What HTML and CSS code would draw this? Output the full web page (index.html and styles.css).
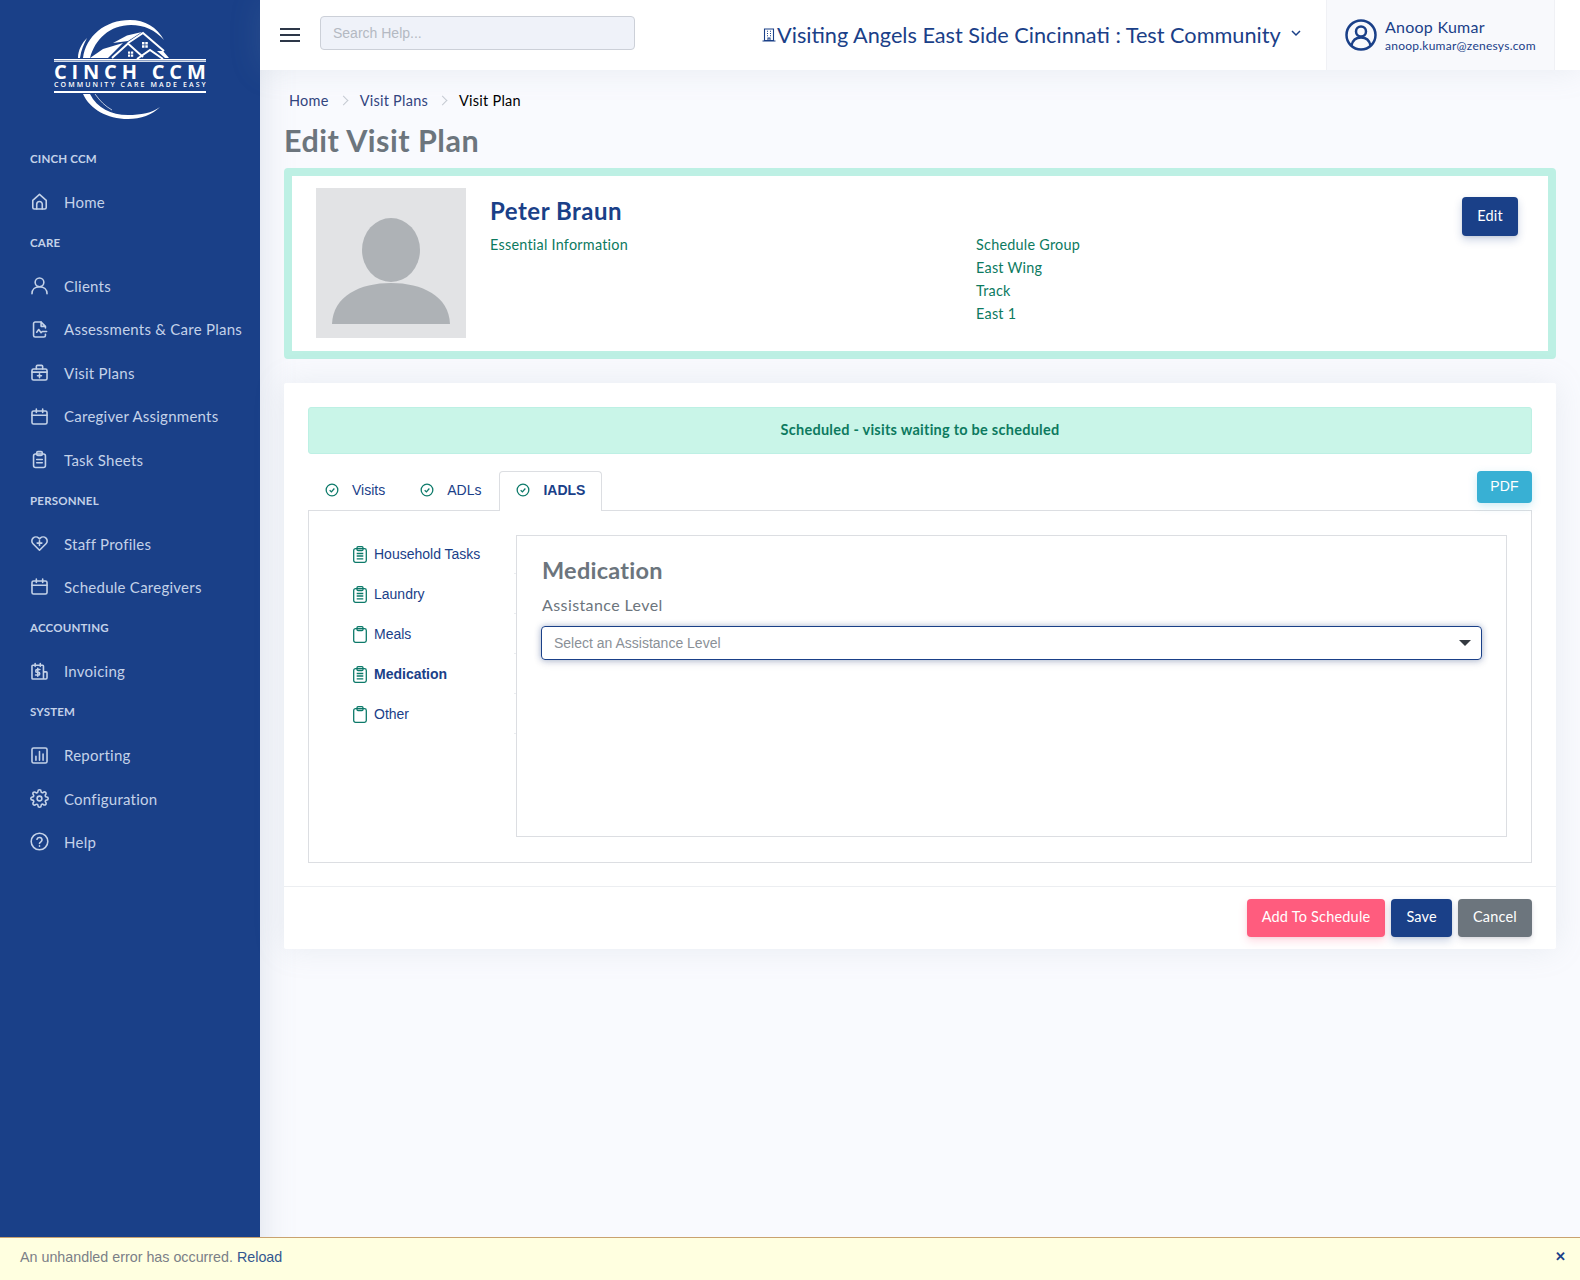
FILE: index.html
```html
<!DOCTYPE html>
<html lang="en">
<head>
  <meta charset="UTF-8">
  <title>Edit Visit Plan</title>
  <link rel="stylesheet" href="styles.css">
</head>
<body>

  <svg class="sprite" width="0" height="0">
    <defs>
      <symbol id="i-home" viewBox="0 0 24 24"><path d="M3.500 10.500 12 3l8.500 7.500v9a2 2 0 0 1-2 2h-13a2 2 0 0 1-2-2z"/><path d="M8.500 21.500v-6a3.500 3.500 0 0 1 7 0v6"/></symbol>
      <symbol id="i-user" viewBox="0 0 24 24"><circle cx="12" cy="8" r="5.500"/><path d="M2.500 22.500c0-5.500 4-9 9.500-9s9.500 3.500 9.500 9"/></symbol>
      <symbol id="i-file" viewBox="0 0 24 24"><path d="M14 2.500H6.500a2 2 0 0 0-2 2v15a2 2 0 0 0 2 2h11a2 2 0 0 0 2-2v-1.500"/><path d="M14 2.500 19.500 8v2M14 2.500V8h5.500"/><path d="M8.500 15.500l2.500-3.500 3 4 1.500-1.500H21"/></symbol>
      <symbol id="i-case" viewBox="0 0 24 24"><rect x="2.500" y="7.500" width="19" height="14" rx="2"/><path d="M8 7.500V4.500a1.500 1.500 0 0 1 1.500-1.500h5A1.500 1.500 0 0 1 16 4.500v3M2.500 11.500h19M12 13.500v5M9.500 16h5"/></symbol>
      <symbol id="i-cal" viewBox="0 0 24 24"><rect x="2.500" y="5" width="19" height="16.500" rx="2"/><path d="M2.500 10.500h19M8 2.500v4.500M16 2.500v4.500"/></symbol>
      <symbol id="i-clip" viewBox="0 0 24 24"><rect x="4.500" y="5" width="15" height="17" rx="2.500"/><rect x="8.500" y="2" width="7" height="5" rx="1.500"/><path d="M8.500 12h7M8.500 16h7"/></symbol>
      <symbol id="i-sheet" viewBox="0 0 14 17"><rect x="0.700" y="2.700" width="12.600" height="13.600" rx="1.800"/><rect x="4" y="0.700" width="6" height="3.800" rx="1"/><path d="M3.700 7.500h6.600M3.700 10h6.600M3.700 12.800h6.600"/></symbol>
      <symbol id="i-sheet-plain" viewBox="0 0 14 17"><rect x="0.700" y="2.700" width="12.600" height="13.600" rx="1.800"/><rect x="4" y="0.700" width="6" height="3.800" rx="1"/></symbol>
      <symbol id="i-heart" viewBox="0 0 24 24"><path d="M12 20.500 3.800 12.300a5 5 0 0 1 0-7.100 5.200 5.200 0 0 1 7.300 0l.9.900.9-.9a5.200 5.200 0 0 1 7.300 0 5 5 0 0 1 0 7.100z"/><path d="M12 8.500v6M9 11.500h6"/></symbol>
      <symbol id="i-bill" viewBox="0 0 24 24"><path d="M17 20.500V5a1 1 0 0 0-1-1H3.500a1 1 0 0 0-1 1v15.500a1 1 0 0 0 1 1H20a1.500 1.500 0 0 0 1.500-1.500v-6.500a1 1 0 0 0-1-1H17"/><path d="M6.500 2v3.500M13 2v3.500M12.500 9.500H9a1.700 1.700 0 0 0 0 3.500h1.500a1.700 1.700 0 0 1 0 3.500H7M9.800 8v10"/></symbol>
      <symbol id="i-bars" viewBox="0 0 24 24"><rect x="2.500" y="2.500" width="19" height="19" rx="2"/><path d="M7.500 18v-5M12 18V7M16.500 18v-8"/></symbol>
      <symbol id="i-gear" viewBox="0 0 24 24"><circle cx="12" cy="12" r="3"/><path d="M19.400 15a1.650 1.650 0 0 0 .33 1.820l.06.06a2 2 0 0 1 0 2.830 2 2 0 0 1-2.830 0l-.06-.06a1.650 1.650 0 0 0-1.820-.33 1.650 1.650 0 0 0-1 1.510V21a2 2 0 0 1-2 2 2 2 0 0 1-2-2v-.09A1.650 1.650 0 0 0 9 19.400a1.650 1.650 0 0 0-1.820.33l-.06.06a2 2 0 0 1-2.830 0 2 2 0 0 1 0-2.830l.06-.06a1.650 1.650 0 0 0 .33-1.820 1.650 1.650 0 0 0-1.510-1H3a2 2 0 0 1-2-2 2 2 0 0 1 2-2h.09A1.650 1.650 0 0 0 4.600 9a1.650 1.650 0 0 0-.33-1.820l-.06-.06a2 2 0 0 1 0-2.830 2 2 0 0 1 2.830 0l.06.06a1.650 1.650 0 0 0 1.820.33H9a1.650 1.650 0 0 0 1-1.510V3a2 2 0 0 1 2-2 2 2 0 0 1 2 2v.09a1.650 1.650 0 0 0 1 1.510 1.650 1.650 0 0 0 1.820-.33l.06-.06a2 2 0 0 1 2.830 0 2 2 0 0 1 0 2.830l-.06.06a1.650 1.650 0 0 0-.33 1.820V9a1.650 1.650 0 0 0 1.510 1H21a2 2 0 0 1 2 2 2 2 0 0 1-2 2h-.09a1.650 1.650 0 0 0-1.510 1z"/></symbol>
      <symbol id="i-help" viewBox="0 0 24 24"><circle cx="12" cy="12" r="10.500"/><path d="M8.800 9.200a3.300 3.300 0 0 1 6.400 1c0 2.200-3.200 2.700-3.200 4.300M12 17.500v.5"/></symbol>
      <symbol id="i-check" viewBox="0 0 24 24"><circle cx="12" cy="12" r="10"/><path d="M8 12.500l3 2.800 5-5.800"/></symbol>
    </defs>
  </svg>

  <div class="layout">
    <aside class="sidebar">
      <div class="logo">
        <svg width="260" height="138" viewBox="0 0 260 138">
          <path class="logo-fill" d="M83 58C86 36 105 20 130 20c15 0 27 7 34 20-9-10-20-15-33-15-21 0-36 14-41 33z"/>
          <path class="logo-fill" d="M78 58c0-8 4-15 9-20-3 6-6 12-7 20z"/>
          <path class="logo-fill" d="M83 94h7c7 14 21 21 38 21 13 0 24-2 32-8-8 8-19 12-32 12-21 0-38-10-45-25z"/>
          <path class="logo-thin" d="M95 94c5 7 10 12 17 16"/>
          <path class="logo-fill" d="M90 58 103 49 123 43 112 54 108 58z"/>
          <path class="logo-fill" d="M113 43 127 35.500 142 32 128 41z"/>
          <path class="logo-line" d="M112 58 128 43.500 143 57"/>
          <path class="logo-line" d="M128 43 143 33 164 51"/>
          <path class="logo-line" d="M137 59 150 50 163 59"/>
          <path class="logo-fill" d="M157 51H163L169 58H165z"/>
          <path class="logo-fill" d="M128 51.500h2.200v2.200H128zM131 51.500h2.200v2.200H131zM128 54.500h2.200v2.200H128zM131 54.500h2.200v2.200H131zM142 42h2.500v2.500H142zM145.300 42h2.500v2.500h-2.500zM142 45.300h2.500v2.500H142zM145.300 45.300h2.500v2.500h-2.500z"/>
          <rect class="logo-fill" x="54" y="59" width="152" height="1.500"/>
          <rect class="logo-fill" x="54" y="61" width="152" height="0.800"/>
          <rect class="logo-fill" x="54" y="91" width="152" height="2"/>
          <text class="logo-name" x="54" y="78.500" textLength="152" lengthAdjust="spacing">CINCH CCM</text>
          <text class="logo-tag" x="54" y="87" textLength="152" lengthAdjust="spacing">COMMUNITY CARE MADE EASY</text>
        </svg>
      </div>

      <div class="nav-label">Cinch CCM</div>
      <a class="nav-item"><svg class="nav-icon"><use href="#i-home"/></svg>Home</a>
      <div class="nav-label">Care</div>
      <a class="nav-item"><svg class="nav-icon"><use href="#i-user"/></svg>Clients</a>
      <a class="nav-item"><svg class="nav-icon"><use href="#i-file"/></svg>Assessments &amp; Care Plans</a>
      <a class="nav-item"><svg class="nav-icon"><use href="#i-case"/></svg>Visit Plans</a>
      <a class="nav-item"><svg class="nav-icon"><use href="#i-cal"/></svg>Caregiver Assignments</a>
      <a class="nav-item"><svg class="nav-icon"><use href="#i-clip"/></svg>Task Sheets</a>
      <div class="nav-label">Personnel</div>
      <a class="nav-item"><svg class="nav-icon"><use href="#i-heart"/></svg>Staff Profiles</a>
      <a class="nav-item"><svg class="nav-icon"><use href="#i-cal"/></svg>Schedule Caregivers</a>
      <div class="nav-label">Accounting</div>
      <a class="nav-item"><svg class="nav-icon"><use href="#i-bill"/></svg>Invoicing</a>
      <div class="nav-label">System</div>
      <a class="nav-item"><svg class="nav-icon"><use href="#i-bars"/></svg>Reporting</a>
      <a class="nav-item"><svg class="nav-icon"><use href="#i-gear"/></svg>Configuration</a>
      <a class="nav-item"><svg class="nav-icon"><use href="#i-help"/></svg>Help</a>
    </aside>

    <div class="main">
      <header class="topbar">
        <button class="burger" type="button"><span></span><span></span><span></span></button>
        <input class="search" type="text" placeholder="Search Help...">
        <div class="community">
          <svg class="building" viewBox="0 0 14 14"><path d="M2.500 1h9v11.500h-9zM.5 13h13M5 3.200h1M8 3.200h1M5 5.500h1M8 5.500h1M5 7.800h1M8 7.800h1M6 12.500V10h2v2.500"/></svg>
          <span>Visiting Angels East Side Cincinnati : Test Community</span>
          <svg class="chevron" viewBox="0 0 12 12"><path d="M2 4l4 4 4-4"/></svg>
        </div>
        <div class="user-box">
          <svg class="avatar" viewBox="0 0 32 32"><circle cx="16" cy="16" r="14.500"/><circle cx="16" cy="12.500" r="5"/><path d="M6.500 26.500c1-5 4.500-8 9.500-8s8.500 3 9.500 8"/></svg>
          <div>
            <div class="user-name">Anoop Kumar</div>
            <div class="user-mail">anoop.kumar@zenesys.com</div>
          </div>
        </div>
      </header>

      <main class="content">
        <nav class="crumbs">
          <a>Home</a><span class="sep"></span><a>Visit Plans</a><span class="sep"></span><b>Visit Plan</b>
        </nav>
        <h1 class="page-title">Edit Visit Plan</h1>

        <section class="patient">
          <div class="photo">
            <svg width="150" height="150" viewBox="0 0 150 150"><ellipse cx="75" cy="62" rx="29" ry="32"/><path d="M16 136c1-28 28-41 59-41s58 13 59 41z"/></svg>
          </div>
          <div class="patient-info">
            <h2 class="patient-name">Peter Braun</h2>
            <div class="patient-cols">
              <div class="patient-col">Essential Information</div>
              <div class="patient-col">
                <div>Schedule Group</div>
                <div>East Wing</div>
                <div>Track</div>
                <div>East 1</div>
              </div>
            </div>
          </div>
          <button class="btn btn-navy btn-edit" type="button">Edit</button>
        </section>

        <section class="plan">
          <div class="plan-body">
            <div class="status">Scheduled - visits waiting to be scheduled</div>

            <div class="tab-row">
              <div class="tabs">
                <a class="tab"><svg class="tab-icon"><use href="#i-check"/></svg>Visits</a>
                <a class="tab"><svg class="tab-icon"><use href="#i-check"/></svg>ADLs</a>
                <a class="tab active"><svg class="tab-icon"><use href="#i-check"/></svg>IADLS</a>
              </div>
              <button class="btn btn-pdf" type="button">PDF</button>
            </div>

            <div class="tab-pane">
              <ul class="task-list">
                <li><svg class="task-icon"><use href="#i-sheet"/></svg>Household Tasks</li>
                <li><svg class="task-icon"><use href="#i-sheet"/></svg>Laundry</li>
                <li><svg class="task-icon"><use href="#i-sheet-plain"/></svg>Meals</li>
                <li class="current"><svg class="task-icon"><use href="#i-sheet"/></svg>Medication</li>
                <li><svg class="task-icon"><use href="#i-sheet-plain"/></svg>Other</li>
              </ul>
              <div class="task-panel">
                <h3 class="task-title">Medication</h3>
                <label class="field-label">Assistance Level</label>
                <div class="select">
                  <span>Select an Assistance Level</span>
                  <i class="caret"></i>
                </div>
              </div>
            </div>
          </div>

          <div class="plan-foot">
            <button class="btn btn-pink" type="button">Add To Schedule</button>
            <button class="btn btn-navy" type="button">Save</button>
            <button class="btn btn-grey" type="button">Cancel</button>
          </div>
        </section>
      </main>
    </div>
  </div>

  <div class="error-bar">
    <span>An unhandled error has occurred. <a>Reload</a></span>
    <span class="error-close">✕</span>
  </div>

</body>
</html>
```

FILE: styles.css
```css
* {
  box-sizing: border-box;
}
body {
  margin: 0;
  height: 1280px;
  overflow: hidden;
  background-color: #f9fafe;
  font-family: "Lato", sans-serif;
  font-size: 15px;
  letter-spacing: 0.25px;
  color: #1a4088;
}
.sprite {
  display: block;
  height: 0;
}
.layout {
  display: flex;
  height: 1280px;
}

/* sidebar */
.sidebar {
  width: 260px;
  flex-shrink: 0;
  background-color: #1a4088;
  color: #c4d2e8;
  box-shadow: 0 0 2rem 0 rgba(136, 152, 170, 0.25);
}
.logo {
  height: 139.500px;
}
.logo svg {
  display: block;
}
.logo-fill {
  fill: #fff;
}
.logo-line {
  fill: none;
  stroke: #fff;
  stroke-width: 2;
}
.logo-thin {
  fill: none;
  stroke: #fff;
  stroke-width: 0.700;
}
.logo-name {
  font-family: "Open Sans", sans-serif;
  font-size: 20px;
  font-weight: 700;
  fill: #fff;
}
.logo-tag {
  font-family: "Open Sans", sans-serif;
  font-size: 7px;
  font-weight: 600;
  fill: #fff;
}
.nav-label {
  height: 40.700px;
  padding: 0 30px 3px;
  display: flex;
  align-items: center;
  font-size: 11.5px;
  font-weight: 700;
  letter-spacing: 0.2px;
  text-transform: uppercase;
}
.nav-item {
  height: 43.400px;
  padding-left: 30px;
  display: flex;
  align-items: center;
}
.nav-icon {
  width: 19px;
  height: 19px;
  margin-right: 15px;
  fill: none;
  stroke: #c4d2e8;
  stroke-width: 2;
  stroke-linecap: round;
  stroke-linejoin: round;
}

/* top bar */
.main {
  flex: 1;
  min-width: 0;
}
.topbar {
  height: 70px;
  background-color: #fff;
  display: flex;
  align-items: center;
  padding-left: 20px;
  box-shadow: 0 0 2rem 0 rgba(136, 152, 170, 0.15);
  position: relative;
}
.burger {
  width: 20px;
  padding: 0;
  border: 0;
  background: none;
  display: flex;
  flex-direction: column;
  gap: 4px;
}
.burger span {
  display: block;
  height: 2px;
  background-color: #2d3748;
}
.search {
  width: 315px;
  height: 34px;
  margin: 0 0 5px 20px;
  padding: 0 12px;
  background-color: #eff2f9;
  border: 1px solid #ccd0d8;
  border-radius: 4px;
  font-family: "Liberation Sans", sans-serif;
  font-size: 14px;
}
.search::placeholder {
  color: #b4b9c2;
}
.community {
  margin: 0 0 1px 127px;
  width: 564px;
  display: flex;
  align-items: center;
  font-size: 21.700px;
  letter-spacing: 0;
  white-space: nowrap;
}
.building {
  width: 14px;
  height: 14px;
  margin-right: 1px;
  fill: none;
  stroke: #1a4088;
  stroke-width: 1.100;
}
.chevron {
  width: 12px;
  height: 12px;
  margin-left: 9px;
  margin-top: -3px;
  fill: none;
  stroke: #1a4088;
  stroke-width: 1.500;
}
.user-box {
  width: 229px;
  height: 70px;
  padding-left: 18px;
  display: flex;
  align-items: center;
  background-color: #f8f9fc;
  border-left: 1px solid #f0f1f5;
  border-right: 1px solid #f0f1f5;
}
.avatar {
  width: 32px;
  height: 32px;
  margin-right: 8px;
  fill: none;
  stroke: #1a4088;
  stroke-width: 2.500;
}
.user-name {
  font-size: 16px;
  line-height: 20px;
}
.user-mail {
  font-size: 12px;
  line-height: 17px;
}

/* content */
.content {
  padding: 19px 24px 0;
}
.crumbs {
  height: 22px;
  padding-left: 5px;
  display: flex;
  align-items: center;
  font-size: 14.500px;
  color: #33457e;
}
.crumbs b {
  font-weight: 400;
  color: #000;
}
.sep {
  width: 31px;
  display: flex;
  justify-content: center;
}
.sep::before {
  content: "";
  width: 6px;
  height: 6px;
  margin-left: -2px;
  border-top: 1.500px solid #c5cad2;
  border-right: 1.500px solid #c5cad2;
  transform: rotate(45deg);
}
.page-title {
  margin: 11px 0 10px;
  font-size: 30.500px;
  line-height: 36px;
  font-weight: 700;
  letter-spacing: 0.500px;
  color: #6c757d;
}
.patient {
  height: 191px;
  padding: 12px 30px 0 24px;
  display: flex;
  align-items: flex-start;
  background-color: #fff;
  border: 8px solid #bdf0e4;
  border-radius: 4px;
}
.photo {
  width: 150px;
  height: 150px;
  flex-shrink: 0;
  background-color: #e2e3e5;
}
.photo svg {
  display: block;
  fill: #aeb2b6;
}
.patient-info {
  flex: 1;
  padding: 7px 0 0 24px;
}
.patient-name {
  margin: 0 0 6px;
  font-size: 24px;
  line-height: 32px;
  font-weight: 700;
  letter-spacing: 0.500px;
  color: #1a4088;
}
.patient-cols {
  display: grid;
  grid-template-columns: 486px 1fr;
  font-size: 14.400px;
  line-height: 23px;
  color: #0d7a5f;
}
.btn {
  height: 38px;
  padding: 0 15px 3px;
  border: 0;
  border-radius: 4px;
  font-family: "Lato", sans-serif;
  font-size: 14.500px;
  letter-spacing: 0.200px;
  color: #fff;
  box-shadow: 0 4px 6px rgba(50, 50, 93, 0.11), 0 1px 3px rgba(0, 0, 0, 0.08);
}
.btn-navy {
  background-color: #1a4088;
  box-shadow: 0 4px 8px rgba(26, 64, 136, 0.22), 0 1px 3px rgba(0, 0, 0, 0.08);
}
.btn-pink {
  background-color: #ff5c7e;
  box-shadow: 0 4px 8px rgba(255, 92, 126, 0.22), 0 1px 3px rgba(0, 0, 0, 0.06);
}
.btn-grey {
  background-color: #6c757d;
}
.btn-pdf {
  width: 55px;
  height: 32px;
  padding: 0 0 2px;
  background-color: #38b0d4;
  box-shadow: 0 3px 8px rgba(56, 176, 212, 0.25);
  font-family: "Liberation Sans", sans-serif;
  font-size: 14px;
}
.btn-edit {
  width: 56px;
  height: 39px;
  padding: 0 0 3px;
  margin-top: 9px;
}
.plan {
  margin-top: 24px;
  background-color: #fff;
  box-shadow: 0 0 2rem 0 rgba(136, 152, 170, 0.15);
  border-radius: 2px;
}
.plan-body {
  padding: 24px 24px 23px;
  border-bottom: 1px solid #eceef1;
}
.status {
  height: 47px;
  padding-bottom: 3px;
  display: flex;
  align-items: center;
  justify-content: center;
  background-color: #c9f5e8;
  border: 1px solid #bdf0e4;
  border-radius: 3px;
  font-weight: 700;
  font-size: 14.500px;
  color: #0d7a5f;
}
.tab-row {
  margin-top: 17px;
  height: 39px;
  display: flex;
  justify-content: space-between;
  align-items: flex-start;
}
.tabs {
  display: flex;
}
.tab {
  height: 40px;
  padding: 0 16px 3px;
  display: flex;
  align-items: center;
  border: 1px solid transparent;
  border-bottom: 0;
  font-family: "Liberation Sans", sans-serif;
  font-size: 14px;
  letter-spacing: 0;
}
.tab:first-child {
  padding-right: 17px;
}
.tab.active {
  margin-left: 1px;
  background-color: #fff;
  border-color: #dcdee2;
  border-radius: 4px 4px 0 0;
  font-weight: 700;
  position: relative;
  z-index: 1;
}
.tab-icon {
  width: 14px;
  height: 14px;
  margin-right: 13px;
  fill: none;
  stroke: #0d7a6a;
  stroke-width: 2.200;
}
.tab-pane {
  height: 353px;
  padding: 24px 24px 25px;
  display: flex;
  border: 1px solid #dcdee2;
}
.task-list {
  width: 183px;
  flex-shrink: 0;
  margin: -1px 0 0;
  padding: 0 0 0 20px;
  list-style: none;
  font-family: "Liberation Sans", sans-serif;
  font-size: 14px;
  letter-spacing: 0;
}
.task-list li {
  height: 40px;
  display: flex;
  align-items: center;
  position: relative;
}
.task-list li::after {
  content: "";
  position: absolute;
  right: 0;
  bottom: 0;
  width: 2px;
  height: 1px;
  background-color: #ebedf0;
}
.task-list .current {
  font-weight: 700;
}
.task-icon {
  width: 14px;
  height: 17px;
  margin-right: 7px;
  fill: none;
  stroke: #0d7a6a;
  stroke-width: 1.300;
}
.task-panel {
  flex: 1;
  padding: 16px 24px 0 25px;
  border: 1px solid #dcdee2;
}
.task-title {
  margin: 0;
  font-size: 23.500px;
  line-height: 36px;
  font-weight: 700;
  color: #6c757d;
}
.field-label {
  display: block;
  margin-top: 6px;
  font-size: 16px;
  line-height: 22px;
  letter-spacing: 0.400px;
  color: #6c757d;
}
.select {
  height: 34px;
  margin: 10px 0 0 -1px;
  padding: 0 12px;
  display: flex;
  align-items: center;
  justify-content: space-between;
  border: 1px solid #1a4088;
  border-radius: 4px;
  box-shadow: 0 3px 9px rgba(50, 50, 93, 0.1), 0 0 6px rgba(26, 64, 136, 0.35);
  font-family: "Liberation Sans", sans-serif;
  font-size: 14px;
  letter-spacing: 0;
  color: #8a9097;
}
.caret {
  width: 0;
  height: 0;
  margin-right: -2px;
  border-left: 6px solid transparent;
  border-right: 6px solid transparent;
  border-top: 6px solid #343a40;
}
.plan-foot {
  height: 62px;
  padding: 12px 24px 0;
  display: flex;
  justify-content: flex-end;
  gap: 6px;
}

/* error bar */
.error-bar {
  position: fixed;
  left: 0;
  right: 0;
  bottom: 0;
  height: 43px;
  padding: 0 20px 5px;
  display: flex;
  align-items: center;
  background-color: #ffffe0;
  border-top: 1px solid #c9a26f;
  font-family: "Liberation Sans", sans-serif;
  font-size: 14.300px;
  letter-spacing: 0;
  color: #7b8087;
}
.error-bar a {
  color: #33578f;
}
.error-close {
  margin-left: auto;
  margin-right: -6px;
  font-size: 13px;
  font-weight: 700;
  color: #1a4088;
}
```
